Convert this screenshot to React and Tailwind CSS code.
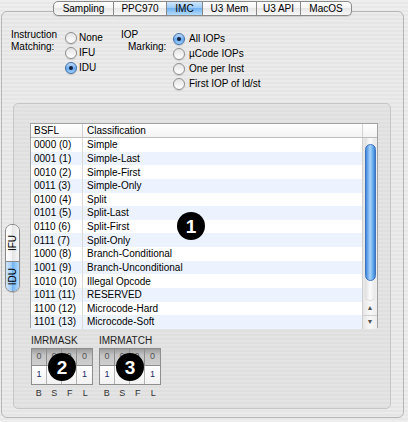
import React from 'react';

const tabs = [
    { label: 'Sampling', w: 'w-[61px]' },
    { label: 'PPC970', w: 'w-[53px]' },
    { label: 'IMC', w: 'w-[36px]', active: true },
    { label: 'U3 Mem', w: 'w-[54px]' },
    { label: 'U3 API', w: 'w-[44px]' },
    { label: 'MacOS', w: 'w-[51px]' },
];

const rows = [
    ['0000 (0)', 'Simple'],
    ['0001 (1)', 'Simple-Last'],
    ['0010 (2)', 'Simple-First'],
    ['0011 (3)', 'Simple-Only'],
    ['0100 (4)', 'Split'],
    ['0101 (5)', 'Split-Last'],
    ['0110 (6)', 'Split-First'],
    ['0111 (7)', 'Split-Only'],
    ['1000 (8)', 'Branch-Conditional'],
    ['1001 (9)', 'Branch-Unconditional'],
    ['1010 (10)', 'Illegal Opcode'],
    ['1011 (11)', 'RESERVED'],
    ['1100 (12)', 'Microcode-Hard'],
    ['1101 (13)', 'Microcode-Soft'],
];

// ************************************************************************************************
const Radio = ({ checked, label, gap }) => (
    <div className={`flex items-center h-[15px] ${gap}`}>
        {checked ? (
            <span className="w-[12px] h-[12px] rounded-full border border-[#3f6fa8] bg-[linear-gradient(#bfdcfb,#6aaaf0_55%,#9fd0fa)] flex items-center justify-center shadow-[0_1px_1px_rgba(0,0,0,0.15)]">
                <span className="w-[4px] h-[4px] rounded-full bg-[#14213a]" />
            </span>
        ) : (
            <span className="w-[12px] h-[12px] rounded-full border border-[#8e8e8e] bg-[linear-gradient(#e4e4e4,#ffffff)] shadow-[0_1px_1px_rgba(0,0,0,0.12)]" />
        )}
        <span className="leading-[12px]">{label}</span>
    </div>
);

const Marker = ({ n, pos }) => (
    <div className={`absolute ${pos} w-[28px] h-[28px] rounded-full bg-black text-white flex items-center justify-center text-[19px] font-bold leading-none`}>
        {n}
    </div>
);

const BitGrid = ({ label }) => (
    <div className="w-[62px]">
        <div className="leading-[12px] text-[10px] text-[#222]">{label}</div>
        <div className="mt-px grid grid-cols-4 border border-[#8e8e8e]">
            {[0, 1, 2, 3].map((i) => (
                <div key={'t' + i} className={`h-[17px] flex items-center justify-center text-[9px] text-[#555] bg-[linear-gradient(#9c9c9c,#c4c4c4_40%,#cfcfcf)] border-b border-[#8e8e8e] ${i < 3 ? 'border-r' : ''}`}>
                    0
                </div>
            ))}
            {[0, 1, 2, 3].map((i) => (
                <div key={'b' + i} className={`h-[18px] flex items-center justify-center text-[9px] text-[#1b2a6e] bg-[linear-gradient(#ffffff,#f2f2f2)] border-[#b4b4b4] ${i < 3 ? 'border-r' : ''}`}>
                    1
                </div>
            ))}
        </div>
        <div className="mt-[2px] grid grid-cols-4 text-[9px] leading-[12px] text-[#333] text-center">
            <span>B</span>
            <span>S</span>
            <span>F</span>
            <span>L</span>
        </div>
    </div>
);

// ************************************************************************************************
const App = () => {
    return (
        <div className="relative w-[408px] h-[422px] overflow-hidden pt-px text-[10px] text-black font-['Liberation_Sans',Arial,sans-serif] bg-[repeating-linear-gradient(#eeeeee_0px,#eeeeee_2px,#e8e8e8_2px,#e8e8e8_4px)]">
            {/* tabs */}
            <div className="relative z-10 flex pl-[53px] h-[15px]">
                {tabs.map((t, idx) => (
                    <div
                        key={t.label}
                        className={`${t.w} h-[15px] flex items-center justify-center border-y border-r border-[#8a8a8a] shadow-[0_1px_1px_rgba(0,0,0,0.12)] ${idx === 0 ? 'border-l rounded-l-[5px]' : ''} ${idx === tabs.length - 1 ? 'rounded-r-[5px]' : ''} ${t.active ? 'bg-[linear-gradient(#cfe6fd,#98c9f7_50%,#74b3f1_50%,#b2dbfc)] border-[#5f7fa8]' : 'bg-[linear-gradient(#ffffff,#f3f3f3_50%,#e7e7e7_50%,#f8f8f8)]'}`}
                    >
                        {t.label}
                    </div>
                ))}
            </div>

            {/**************************************************************************************************/}
            <div className="ml-px -mt-[5px] w-[403px] h-[407px] rounded-[6px] border border-[#b6b6b6] bg-[repeating-linear-gradient(#ebebeb_0px,#ebebeb_2px,#e5e5e5_2px,#e5e5e5_4px)]">
                {/* matching options */}
                <div className="h-[91px] pt-[17px] flex">
                    <div className="ml-[9px] w-[54px] leading-[12px]">
                        <div>Instruction</div>
                        <div>Matching:</div>
                    </div>
                    <div className="w-[56px] pt-px">
                        <Radio label="None" gap="gap-[2px]" />
                        <Radio label="IFU" gap="gap-[2px]" />
                        <Radio label="IDU" gap="gap-[2px]" checked />
                    </div>
                    <div className="w-[52px] leading-[12px]">
                        <div>IOP</div>
                        <div className="pl-[7px]">Marking:</div>
                    </div>
                    <div className="pt-[2px]">
                        <Radio label="All IOPs" gap="gap-[4px]" checked />
                        <Radio label="µCode IOPs" gap="gap-[4px]" />
                        <Radio label="One per Inst" gap="gap-[4px]" />
                        <Radio label="First IOP of ld/st" gap="gap-[4px]" />
                    </div>
                </div>

                {/**************************************************************************************************/}
                <div className="ml-[11px] w-[378px] h-[306px] rounded-[5px] border border-[#c6c6c6] bg-[repeating-linear-gradient(#e4e4e4_0px,#e4e4e4_2px,#dfdfdf_2px,#dfdfdf_4px)] flex">
                    {/* vertical tabs */}
                    <div className="-ml-[9px] mt-[120px] self-start w-[15px] flex flex-col rounded-[7px] border border-[#8a8a8a] overflow-hidden shadow-[0_1px_1px_rgba(0,0,0,0.15)]">
                        <div className="h-[37px] flex items-center justify-center bg-[linear-gradient(to_right,#ffffff,#f2f2f2_50%,#e4e4e4_50%,#f6f6f6)] border-b border-[#8a8a8a]">
                            <span className="[writing-mode:vertical-rl] rotate-180 leading-none">IFU</span>
                        </div>
                        <div className="h-[29px] flex items-center justify-center bg-[linear-gradient(to_right,#cfe6fd,#98c9f7_50%,#74b3f1_50%,#b2dbfc)]">
                            <span className="[writing-mode:vertical-rl] rotate-180 leading-none">IDU</span>
                        </div>
                    </div>

                    <div className="ml-[10px] mt-[19px] flex flex-col">
                        {/* table */}
                        <div className="w-[348px] h-[205px] border border-[#a3a3a3] bg-white flex flex-col">
                            <div className="h-[14px] flex border-b border-[#bdbdbd] bg-[linear-gradient(#ffffff,#f3f3f3)] leading-[13px]">
                                <div className="w-[52px] pl-[3px] border-r border-[#d2d2d2]">BSFL</div>
                                <div className="flex-1 pl-[4px]">Classification</div>
                                <div className="w-[15px] border-l border-[#d2d2d2]" />
                            </div>
                            <div className="flex flex-1">
                                <div className="flex-1 flex flex-col">
                                    {rows.map((r, idx) => (
                                        <div key={idx} className={`h-[13.64px] flex items-center ${idx % 2 === 1 ? 'bg-[#edf3fe]' : 'bg-white'}`}>
                                            <div className="w-[52px] h-full pl-[3px] flex items-center border-r border-[#dadada]">{r[0]}</div>
                                            <div className="pl-[4px]">{r[1]}</div>
                                        </div>
                                    ))}
                                </div>
                                {/* scrollbar */}
                                <div className="w-[15px] flex flex-col border-l border-[#cfcfcf] bg-[linear-gradient(to_right,#e6e6e6,#f8f8f8_50%,#ececec)]">
                                    <div className="flex-1 mx-[2px] rounded-b-full bg-[linear-gradient(to_right,#dedede,#fbfbfb_50%,#e8e8e8)] shadow-[0_1px_1px_rgba(0,0,0,0.12)]">
                                        <div className="mt-[6px] mx-auto w-[11px] h-[137px] rounded-full border border-[#3d74be] bg-[linear-gradient(to_right,#3f87de,#a9d3fa_45%,#74b5f2_70%,#3b80d6)]" />
                                    </div>
                                    <div className="h-[14px] mt-[2px] flex items-center justify-center text-[7px] text-[#555] border-b border-[#cfcfcf]">▲</div>
                                    <div className="h-[13px] flex items-center justify-center text-[7px] text-[#555]">▼</div>
                                </div>
                            </div>
                        </div>

                        {/* mask / match */}
                        <div className="mt-[7px] ml-px flex gap-[6px]">
                            <BitGrid label="IMRMASK" />
                            <BitGrid label="IMRMATCH" />
                        </div>
                    </div>
                </div>
            </div>

            {/**************************************************************************************************/}
            <Marker n="1" pos="left-[177px] top-[212px]" />
            <Marker n="2" pos="left-[48px] top-[353px]" />
            <Marker n="3" pos="left-[116px] top-[353px]" />
        </div>
    );
};

export default App;
